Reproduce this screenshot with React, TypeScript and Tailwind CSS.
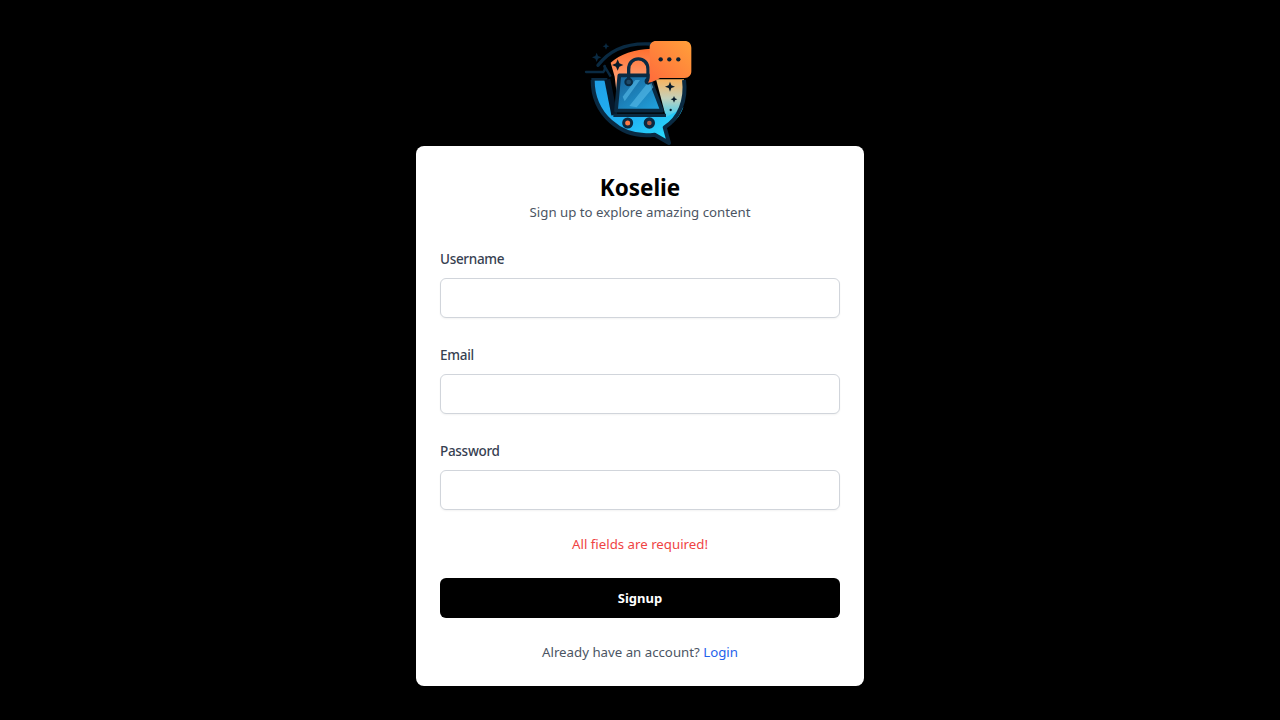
import React from 'react';

const NAVY = '#0a2a42';

const Logo: React.FC = () => (
  <svg viewBox="42 12 336 336" className="h-28 w-28 shrink-0" fill="none">
    <defs>
      <linearGradient id="low" x1="0" y1="0" x2="1" y2="1">
        <stop offset="0" stopColor="#1f9fe6" />
        <stop offset="0.55" stopColor="#22b4f4" />
        <stop offset="1" stopColor="#2be8ff" />
      </linearGradient>
      <linearGradient id="top" x1="0" y1="0" x2="0" y2="1">
        <stop offset="0" stopColor="#ff6f2e" />
        <stop offset="0.55" stopColor="#ffa278" />
        <stop offset="1" stopColor="#3aa0d8" />
      </linearGradient>
      <linearGradient id="side" x1="0" y1="0" x2="0" y2="1">
        <stop offset="0" stopColor="#f7b35f" />
        <stop offset="0.5" stopColor="#c4d2bc" />
        <stop offset="1" stopColor="#38ccf5" />
      </linearGradient>
      <linearGradient id="bubble" x1="1" y1="0" x2="0" y2="1">
        <stop offset="0" stopColor="#ffa03a" />
        <stop offset="1" stopColor="#ff6a3c" />
      </linearGradient>
      <linearGradient id="bag" x1="0" y1="0" x2="1" y2="1">
        <stop offset="0" stopColor="#175f94" />
        <stop offset="1" stopColor="#22a6e2" />
      </linearGradient>
    </defs>
    {/* cyan lower body */}
    <path
      d="M68 150 L112 150 L135 255 L288 255 L340 232 C330 262 310 280 284 294 L294 334 L254 312 C160 326 72 262 68 150 Z"
      fill="url(#low)"
    />
    {/* orange crown */}
    <path d="M244 56 C192 58 150 72 122 98 L134 140 L146 240 L250 240 Z" fill="url(#top)" />
    {/* right side */}
    <path d="M258 148 L342 148 C346 185 342 212 332 238 L288 262 Z" fill="url(#side)" />
    {/* rim */}
    <path d="M84 106 C120 58 175 38 242 42" stroke={NAVY} strokeWidth="10" strokeLinecap="round" />
    <path
      d="M68 150 C68 250 150 328 254 314 L297 339 L284 292 C328 264 350 210 342 150"
      stroke={NAVY}
      strokeWidth="12"
      strokeLinejoin="round"
    />
    {/* shelf and cart bar */}
    <path d="M48 126 L100 126 C104 122 106 116 104 108" stroke={NAVY} strokeWidth="7" strokeLinecap="round" />
    <path d="M102 106 L122 140" stroke={NAVY} strokeWidth="7" />
    <path d="M64 148 L112 148" stroke={NAVY} strokeWidth="8" />
    <path d="M112 148 L133 255" stroke="#06182a" strokeWidth="18" />
    <path d="M130 256 L288 256" stroke={NAVY} strokeWidth="10" />
    {/* wheels */}
    <circle cx="173" cy="279" r="12" fill="#ff7b45" stroke={NAVY} strokeWidth="9" />
    <circle cx="238" cy="279" r="12" fill="#a85a48" stroke={NAVY} strokeWidth="10" />
    {/* bag */}
    <path
      d="M148 136 L236 136 L276 242 L138 242 Z"
      fill="url(#bag)"
      stroke={NAVY}
      strokeWidth="11"
      strokeLinejoin="round"
    />
    <path d="M158 200 L196 150 L210 150 L164 214 Z M178 228 L240 150 L250 172 L200 232 Z" fill="#58bdea" opacity="0.6" />
    <path d="M176 152 L176 118 C176 76 234 76 234 118 L234 150" stroke={NAVY} strokeWidth="10" />
    <circle cx="176" cy="156" r="10" fill="#1f4a68" stroke={NAVY} strokeWidth="6" />
    <circle cx="234" cy="154" r="10" fill={NAVY} />
    {/* bubble */}
    <path
      d="M258 33 L344 33 C356 33 364 41 364 53 L364 124 C364 136 356 144 344 144 L270 144 C260 150 250 156 234 158 C240 150 240 138 239 128 L239 52 C239 41 247 33 258 33 Z"
      fill="url(#bubble)"
    />
    <circle cx="272" cy="88" r="6.5" fill="#0d2030" />
    <circle cx="298" cy="88" r="6.5" fill="#0d2030" />
    <circle cx="325" cy="88" r="6.5" fill="#0d2030" />
    {/* sparkles */}
    <path d="M143 88 L148 100 L160 105 L148 110 L143 122 L138 110 L126 105 L138 100 Z" fill="#061a2a" />
    <path d="M80 68 L84 78 L94 82 L84 86 L80 96 L76 86 L66 82 L76 78 Z" fill={NAVY} />
    <path d="M108 39 L111 46 L118 49 L111 52 L108 59 L105 52 L98 49 L105 46 Z" fill={NAVY} />
    <path d="M300 155 L304 166 L315 170 L304 174 L300 185 L296 174 L285 170 L296 166 Z" fill="#061a2a" />
    <path d="M312 198 L315 205 L322 208 L315 211 L312 218 L309 211 L302 208 L309 205 Z" fill="#061a2a" />
    <circle cx="302" cy="240" r="3.5" fill="#061a2a" />
  </svg>
);

const Field: React.FC<{ label: string; type?: string }> = ({ label, type = 'text' }) => (
  <div className="mb-6">
    <label className="mb-2 block pt-[2px] text-[13.5px] font-medium leading-[22px] tracking-[-0.3px] text-[#374151]">
      {label}
    </label>
    <input
      type={type}
      className="h-10 w-full rounded-md border border-[#d1d5db] bg-white px-3 shadow-xs outline-none"
    />
  </div>
);

export default function App() {
  return (
    <div className="flex min-h-screen flex-col items-center justify-center bg-black font-['Noto_Sans',sans-serif]">
      <Logo />
      <div className="w-full max-w-md rounded-lg bg-white p-6">
        <div className="mb-6 text-center">
          <h1 className="pt-[3px] text-[22.5px] font-bold leading-[29px] text-black">Koselie</h1>
          <p className="pt-px text-[13.25px] leading-[19px] text-[#4b5563]">Sign up to explore amazing content</p>
        </div>
        <Field label="Username" />
        <Field label="Email" type="email" />
        <Field label="Password" type="password" />
        <p className="mb-6 pt-px text-center text-[13.25px] leading-[19px] text-[#ef4444]">All fields are required!</p>
        <button className="mb-6 h-10 w-full rounded-md bg-black pt-px text-[13px] font-bold text-white">Signup</button>
        <p className="pt-px text-center text-[13.25px] leading-[19px] text-[#4b5563]">
          Already have an account? <a className="text-[#2563eb]">Login</a>
        </p>
      </div>
    </div>
  );
}
